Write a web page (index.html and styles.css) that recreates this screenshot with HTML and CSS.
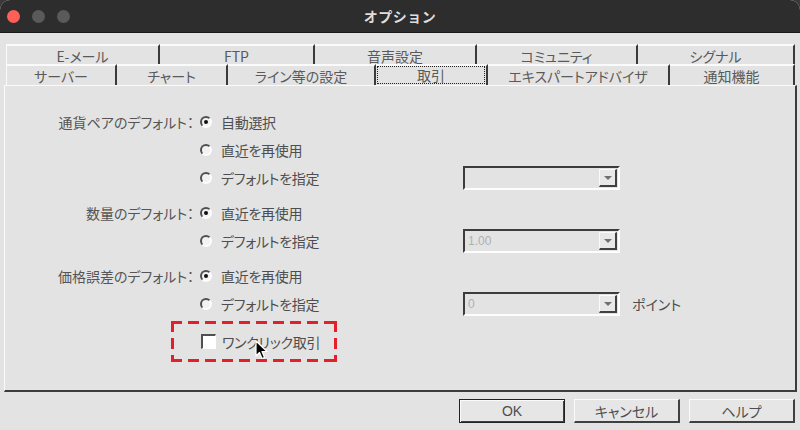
FILE: index.html
```html
<!DOCTYPE html>
<html lang="ja">
<head>
<meta charset="utf-8">
<link rel="stylesheet" href="styles.css">
</head>
<body>
<div class="window">
  <div class="titlebar">
    <div class="lights"><span class="light red"></span><span class="light"></span><span class="light"></span></div>
    <div class="title">オプション</div>
  </div>
  <div class="content">
    <div class="tabs">
      <div class="tabrow r1">
        <div class="tab">E-メール</div>
        <div class="tab">FTP</div>
        <div class="tab">音声設定</div>
        <div class="tab">コミュニティ</div>
        <div class="tab">シグナル</div>
      </div>
      <div class="tabrow r2">
        <div class="tab">サーバー</div>
        <div class="tab">チャート</div>
        <div class="tab">ライン等の設定</div>
        <div class="tab sel"><span class="focus">取引</span></div>
        <div class="tab">エキスパートアドバイザ</div>
        <div class="tab">通知機能</div>
      </div>
    </div>
    <div class="panel">
      <div class="group">
        <div class="row"><span class="label">通貨ペアのデフォルト：</span><span class="opt"><i class="radio on"></i>自動選択</span></div>
        <div class="row"><span class="label"></span><span class="opt"><i class="radio"></i>直近を再使用</span></div>
        <div class="row"><span class="label"></span><span class="opt"><i class="radio"></i>デフォルトを指定</span><span class="combo"><span class="val"></span><span class="arrow"><i></i></span></span></div>
      </div>
      <div class="group">
        <div class="row"><span class="label">数量のデフォルト：</span><span class="opt"><i class="radio on"></i>直近を再使用</span></div>
        <div class="row"><span class="label"></span><span class="opt"><i class="radio"></i>デフォルトを指定</span><span class="combo"><span class="val">1.00</span><span class="arrow"><i></i></span></span></div>
      </div>
      <div class="group">
        <div class="row"><span class="label">価格誤差のデフォルト：</span><span class="opt"><i class="radio on"></i>直近を再使用</span></div>
        <div class="row"><span class="label"></span><span class="opt"><i class="radio"></i>デフォルトを指定</span><span class="combo"><span class="val">0</span><span class="arrow"><i></i></span></span><span class="unit">ポイント</span></div>
      </div>
      <div class="highlight">
        <span class="check"></span><span class="checktext">ワンクリック取引</span>
        <svg class="cursor" width="14" height="20" viewBox="0 0 14 20"><path d="M1 1 L1 16 L4.5 12.5 L7 18.5 L9.5 17.5 L7 11.5 L12 11.5 Z" fill="#000" stroke="#fff" stroke-width="1.2" stroke-linejoin="round"/></svg>
      </div>
    </div>
    <div class="buttons">
      <div class="btn default">OK</div>
      <div class="btn">キャンセル</div>
      <div class="btn">ヘルプ</div>
    </div>
  </div>
</div>
</body>
</html>
```
FILE: styles.css
```css
html, body {
  margin: 0;
  padding: 0;
  background: #3a3a3a;
}
body {
  width: 800px;
  height: 430px;
  overflow: hidden;
  font-family: "Noto Sans CJK JP", "Noto Sans", sans-serif;
  font-size: 14px;
  color: #4a4a4a;
}
.window {
  width: 800px;
  height: 430px;
  background: #e3e3e3;
  border-radius: 10px 10px 0 0;
  overflow: hidden;
}
.titlebar {
  height: 33px;
  background: #2d2d2d;
  border-bottom: 1px solid #1a1a1a;
  box-sizing: border-box;
  display: flex;
  align-items: center;
  position: relative;
}
.lights {
  display: flex;
  gap: 12px;
  padding-left: 7px;
}
.light {
  width: 13px;
  height: 13px;
  border-radius: 50%;
  background: #5a5a5a;
}
.light.red { background: #fe5f57; }
.title {
  flex: 1;
  text-align: center;
  margin-right: 70px;
  color: #dedede;
  font-weight: bold;
  font-size: 14px;
  letter-spacing: 0.5px;
}
.content {
  padding-top: 11px;
}
.tabs {
  margin-left: 6px;
  width: 789px;
}
.tabrow {
  display: grid;
  font-feature-settings: "palt";
  color: #5a5a5a;
}
.r1 {
  grid-template-columns: 154px 155px 162px 161px 157px;
  height: 20px;
}
.r2 {
  grid-template-columns: 111px 111px 148px 112px 182px 125px;
  height: 21px;
}
.tab {
  border-top: 2px solid #fafafa;
  border-right: 2px solid #3a3a3a;
  box-sizing: border-box;
  display: flex;
  align-items: center;
  justify-content: center;
  font-size: 14px;
  line-height: 1;
  background: #e3e3e3;
}
.tabrow .tab:first-child { border-left: 1px solid #fafafa; }
.r1 .tab { padding-top: 1px; }
.tab.sel { padding: 0 1px 1px 1px; align-items: stretch; }
.focus {
  flex: 1;
  border: 1px dotted #222;
  display: flex;
  align-items: center;
  justify-content: center;
}
.panel {
  margin-left: 4px;
  width: 793px;
  height: 307px;
  box-sizing: border-box;
  border-top: 1px solid #fafafa;
  border-left: 1px solid #fafafa;
  border-right: 2px solid #3c3c3c;
  border-bottom: 2px solid #3c3c3c;
  padding-top: 22px;
  display: flex;
  flex-direction: column;
  gap: 7px;
}
.row {
  height: 28px;
  display: flex;
  align-items: center;
}
.label {
  width: 195px;
  padding-right: 6px;
  box-sizing: border-box;
  flex: none;
  text-align: right;
  font-feature-settings: "palt";
  color: #555;
}
.opt {
  width: 263px;
  flex: none;
  display: flex;
  align-items: center;
  font-feature-settings: "palt";
  letter-spacing: -0.3px;
  color: #4e4e4e;
}
.radio {
  width: 12px;
  height: 12px;
  box-sizing: border-box;
  border-radius: 50%;
  border: 2px solid #fdfdfd;
  border-top-color: #505050;
  border-left-color: #505050;
  background: #f2f2f2;
  margin-right: 9px;
  display: flex;
  align-items: center;
  justify-content: center;
}
.radio.on::after {
  content: "";
  width: 4px;
  height: 4px;
  border-radius: 50%;
  background: #111;
}
.combo {
  width: 157px;
  height: 24px;
  box-sizing: border-box;
  border: 2px solid #fdfdfd;
  border-top-color: #3c3c3c;
  border-left-color: #3c3c3c;
  display: flex;
  align-items: center;
  background: #e3e3e3;
}
.val {
  flex: 1;
  padding-left: 3px;
  font-family: "Liberation Sans", sans-serif;
  font-size: 12px;
  color: #b0b0b0;
}
.arrow {
  width: 18px;
  height: 18px;
  box-sizing: border-box;
  margin-right: 1px;
  border-top: 1px solid #fafafa;
  border-left: 1px solid #fafafa;
  border-right: 2px solid #404040;
  border-bottom: 2px solid #404040;
  background: #e8e8e8;
  display: flex;
  align-items: center;
  justify-content: center;
}
.arrow i {
  width: 0;
  height: 0;
  border-left: 4px solid transparent;
  border-right: 4px solid transparent;
  border-top: 4px solid #707070;
}
.unit {
  margin-left: 12px;
  font-feature-settings: "palt";
  color: #4e4e4e;
}
.highlight {
  position: relative;
  margin-left: 166px;
  margin-top: -4px;
  width: 166px;
  height: 41px;
  box-sizing: border-box;
  background:
    repeating-linear-gradient(90deg, #e3202a 0 11px, transparent 11px 17px) top left / 100% 3px no-repeat,
    repeating-linear-gradient(90deg, #e3202a 0 11px, transparent 11px 17px) bottom left / 100% 3px no-repeat,
    repeating-linear-gradient(180deg, #e3202a 0 11px, transparent 11px 17px) top left / 3px 100% no-repeat,
    repeating-linear-gradient(180deg, #e3202a 0 11px, transparent 11px 17px) top right / 3px 100% no-repeat;
  display: flex;
  align-items: center;
  padding-left: 30px;
}
.check {
  width: 15px;
  height: 15px;
  box-sizing: border-box;
  border: 2px solid #fdfdfd;
  border-top-color: #505050;
  border-left-color: #505050;
  border-right-width: 1px;
  border-bottom-width: 1px;
  background: #fff;
  margin-right: 6px;
}
.checktext {
  font-feature-settings: "palt";
  letter-spacing: -0.3px;
  color: #4e4e4e;
}
.cursor {
  position: absolute;
  left: 84px;
  top: 19px;
}
.buttons {
  display: flex;
  justify-content: flex-end;
  gap: 9px;
  padding-right: 5px;
  margin-top: 7px;
}
.btn {
  width: 106px;
  height: 24px;
  box-sizing: border-box;
  border-top: 1px solid #fafafa;
  border-left: 1px solid #fafafa;
  border-right: 2px solid #404040;
  border-bottom: 2px solid #404040;
  display: flex;
  align-items: center;
  justify-content: center;
  font-feature-settings: "palt";
  color: #4e4e4e;
  background: #e6e6e6;
}
.btn.default {
  border: 1px solid #222;
  box-shadow: inset 1px 1px 0 #fafafa, inset -1px -1px 0 #404040;
  font-family: "Liberation Sans", sans-serif;
}
```
